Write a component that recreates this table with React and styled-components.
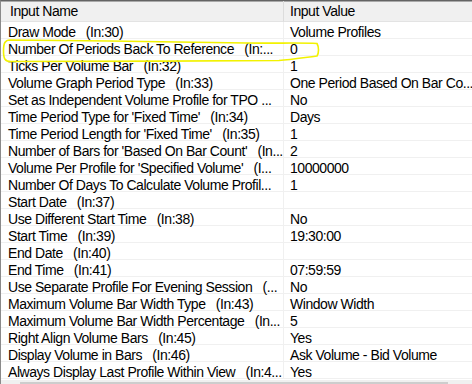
import React from 'react'
import styled, { createGlobalStyle } from 'styled-components'

const GlobalStyle = createGlobalStyle`
  html, body {
    margin: 0;
    padding: 0;
    background: #ffffff;
  }
  body {
    font-family: "Liberation Sans", Arial, sans-serif;
  }
`

const Window = styled.div`
  position: relative;
  width: 472px;
  height: 384px;
  overflow: hidden;
  background: #ffffff;
  border-top: 1px solid #646464;
  border-left: 1px solid #8a8a8a;
  box-sizing: border-box;
  display: flex;
  flex-direction: column;
`

const Table = styled.div`
  display: grid;
  grid-template-columns: 283px 1fr;
  font-size: 14px;
  letter-spacing: -0.45px;
  color: #000000;
`

const HeaderCell = styled.div`
  height: 21px;
  box-sizing: border-box;
  background: #f0f0f0;
  box-shadow: inset 0 1px 0 #a9a9a9;
  border-bottom: 1px solid #e3e3e3;
  border-right: ${p => (p.$last ? 'none' : '1px solid #dcdcdc')};
  padding: 2px 0 0 ${p => (p.$last ? '6px' : '9px')};
  line-height: 17px;
  white-space: nowrap;
`

const Cell = styled.div`
  box-sizing: border-box;
  height: 17px;
  border-bottom: 1px solid #f0f0f0;
  border-right: ${p => (p.$value ? 'none' : '1px solid #f0f0f0')};
  padding: 3px 0 0 ${p => (p.$value ? '6px' : '7px')};
  line-height: 15px;
  white-space: pre;
  clip-path: inset(-6px 0 -6px 0);
`

const ScrollTrack = styled.div`
  margin-top: 1px;
  flex: 1;
  background: #f0f0f0;
  padding: 2px 0 0 19px;
`

const ScrollThumb = styled.div`
  width: 428px;
  height: 100%;
  background: #cdcdcd;
`

const Annotation = styled.svg`
  position: absolute;
  left: 0;
  top: 0;
  pointer-events: none;
`

const rows = [
  ['Draw Mode   (In:30)', 'Volume Profiles'],
  ['Number Of Periods Back To Reference   (In:...', '0'],
  ['Ticks Per Volume Bar   (In:32)', '1'],
  ['Volume Graph Period Type   (In:33)', 'One Period Based On Bar Co...'],
  ['Set as Independent Volume Profile for TPO ...', 'No'],
  ["Time Period Type for 'Fixed Time'   (In:34)", 'Days'],
  ["Time Period Length for 'Fixed Time'   (In:35)", '1'],
  ["Number of Bars for 'Based On Bar Count'   (In...", '2'],
  ["Volume Per Profile for 'Specified Volume'   (I...", '10000000'],
  ['Number Of Days To Calculate Volume Profil...', '1'],
  ['Start Date   (In:37)', ''],
  ['Use Different Start Time   (In:38)', 'No'],
  ['Start Time   (In:39)', '19:30:00'],
  ['End Date   (In:40)', ''],
  ['End Time   (In:41)', '07:59:59'],
  ['Use Separate Profile For Evening Session   (...', 'No'],
  ['Maximum Volume Bar Width Type   (In:43)', 'Window Width'],
  ['Maximum Volume Bar Width Percentage   (In...', '5'],
  ['Right Align Volume Bars   (In:45)', 'Yes'],
  ['Display Volume in Bars   (In:46)', 'Ask Volume - Bid Volume'],
  ['Always Display Last Profile Within View   (In:4...', 'Yes'],
]

export default function App() {
  return (
    <>
      <GlobalStyle />
      <Window>
        <Table>
          <HeaderCell>Input Name</HeaderCell>
          <HeaderCell $last>Input Value</HeaderCell>
          {rows.map(([name, value], i) => (
            <React.Fragment key={i}>
              <Cell>{name}</Cell>
              <Cell $value>{value}</Cell>
            </React.Fragment>
          ))}
        </Table>
        <ScrollTrack>
          <ScrollThumb />
        </ScrollTrack>
        {/* hand drawn highlight around the second row */}
        <Annotation width="472" height="384" viewBox="0 0 472 384">
          <path
            d="M 9 39 C 80 39.5, 200 41, 245 42 C 275 42.5, 300 41.5, 316 42.5 C 318 46, 318 52, 316 55 C 300 57, 290 58.5, 278 59.5 C 200 60, 60 60.5, 10 60.5 C 4 60.5, 2.5 58, 2.5 50 C 2.5 42, 4 39, 9 39 Z"
            fill="none"
            stroke="#f2f200"
            strokeWidth="1.6"
          />
        </Annotation>
      </Window>
    </>
  )
}
